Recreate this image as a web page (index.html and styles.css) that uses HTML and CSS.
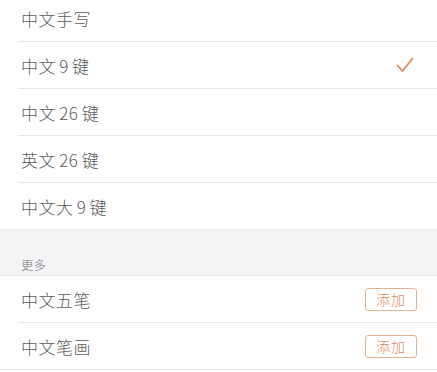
FILE: index.html
```html
<!DOCTYPE html>
<html lang="zh-CN">
<head>
    <meta charset="UTF-8">
    <meta name="viewport" content="width=device-width, initial-scale=1.0">
    <title>键盘</title>
    <link rel="stylesheet" href="styles.css">
</head>
<body>
    <ul class="list top-list">
        <li class="row"><span>中文手写</span></li>
        <li class="row">
            <span>中文 9 键</span>
            <svg class="check" width="18" height="16" viewBox="0 0 18 16">
                <path d="M1.5 8.5 L6.5 14 L16.5 1.5" fill="none" stroke="#d98a5c" stroke-width="1.8" stroke-linecap="round" stroke-linejoin="round"/>
            </svg>
        </li>
        <li class="row"><span>中文 26 键</span></li>
        <li class="row"><span>英文 26 键</span></li>
        <li class="row last"><span>中文大 9 键</span></li>
    </ul>

    <div class="section-title">更多</div>

    <ul class="list">
        <li class="row">
            <span>中文五笔</span>
            <button class="add-btn">添加</button>
        </li>
        <li class="row">
            <span>中文笔画</span>
            <button class="add-btn">添加</button>
        </li>
    </ul>
</body>
</html>
```

FILE: styles.css
```css
body {
    margin: 0;
    background: #fff;
    font-family: "Noto Sans CJK SC", "Noto Sans", sans-serif;
    color: #5c5c5c;
}
.list {
    list-style: none;
    margin: 0;
    padding: 0 0 0 18px;
    background: #fff;
    border-bottom: 1px solid #e8e8e8;
}
/* first row is partly scrolled off the top */
.top-list {
    margin-top: -5px;
    border-bottom: none;
}
.row {
    height: 46px;
    display: flex;
    align-items: center;
    justify-content: space-between;
    padding: 0 20px 0 3px;
    border-bottom: 1px solid #e8e8e8;
    font-size: 17px;
    font-weight: 300;
    letter-spacing: 0.5px;
    word-spacing: -1px;
}
.row:last-child {
    border-bottom: none;
}
.check {
    margin-right: 3px;
}
.section-title {
    height: 47px;
    box-sizing: border-box;
    padding: 0 0 1px 21px;
    display: flex;
    align-items: flex-end;
    background: #f4f4f6;
    border-top: 1px solid #e8e8e8;
    border-bottom: 1px solid #e8e8e8;
    font-size: 12.5px;
    font-weight: 300;
    color: #7a7a7a;
}
.add-btn {
    width: 52px;
    height: 23px;
    padding: 0;
    border: 1px solid #e6b195;
    border-radius: 3px;
    background: #fff;
    color: #d98a5c;
    font-family: inherit;
    font-size: 14px;
    font-weight: 300;
    letter-spacing: 1px;
}
```
